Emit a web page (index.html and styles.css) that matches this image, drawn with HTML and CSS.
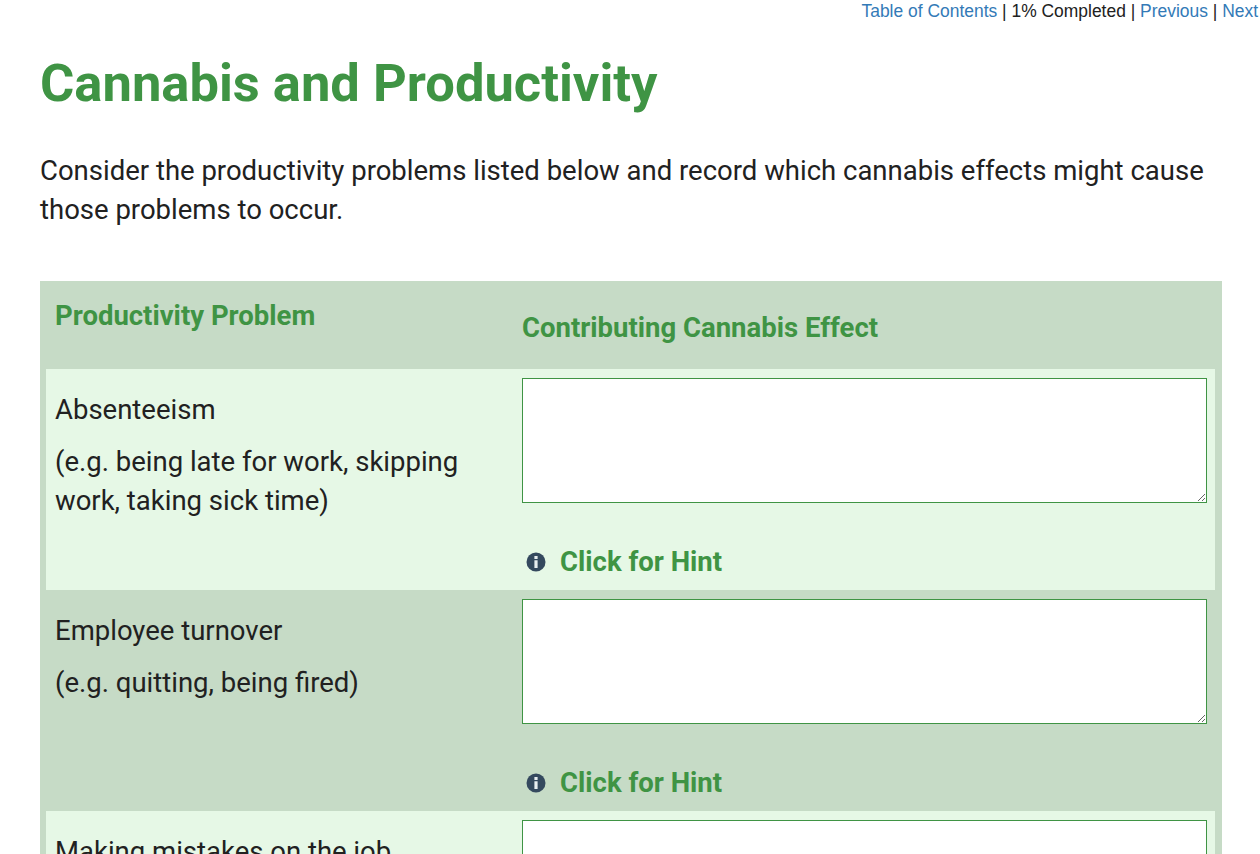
FILE: index.html
```html
<!DOCTYPE html>
<html lang="en">
<head>
  <meta charset="UTF-8">
  <title>Cannabis and Productivity</title>
  <link rel="stylesheet" href="styles.css">
</head>
<body>
  <div class="top-nav">
    <a href="#">Table of Contents</a> | <span class="progress">1% Completed</span> | <a href="#">Previous</a> | <a href="#">Next</a>
  </div>
  <main class="content">
    <h1>Cannabis and Productivity</h1>
    <p class="intro">Consider the productivity problems listed below and record which cannabis effects might cause those problems to occur.</p>
    <table class="effects">
      <thead>
        <tr>
          <th class="col-problem">Productivity Problem</th>
          <th class="col-effect">Contributing Cannabis Effect</th>
        </tr>
      </thead>
      <tbody>
        <tr class="light">
          <td class="problem">
            <p>Absenteeism</p>
            <p>(e.g. being late for work, skipping work, taking sick time)</p>
          </td>
          <td class="effect">
            <textarea></textarea>
            <a class="hint" href="#">
              <svg class="hint-icon" viewBox="0 0 20 20"><circle cx="10" cy="10" r="9.5" fill="#34495e"/><path d="M8.4 4h3.2v3H8.4zM8.4 8.2h3.2v7.8H8.4z" fill="#e8eef0"/></svg>
              Click for Hint
            </a>
          </td>
        </tr>
        <tr class="dark">
          <td class="problem">
            <p>Employee turnover</p>
            <p>(e.g. quitting, being fired)</p>
          </td>
          <td class="effect">
            <textarea></textarea>
            <a class="hint" href="#">
              <svg class="hint-icon" viewBox="0 0 20 20"><circle cx="10" cy="10" r="9.5" fill="#34495e"/><path d="M8.4 4h3.2v3H8.4zM8.4 8.2h3.2v7.8H8.4z" fill="#e8eef0"/></svg>
              Click for Hint
            </a>
          </td>
        </tr>
        <tr class="light">
          <td class="problem">
            <p>Making mistakes on the job</p>
            <p>(e.g. errors, accidents)</p>
          </td>
          <td class="effect">
            <textarea></textarea>
            <a class="hint" href="#">
              <svg class="hint-icon" viewBox="0 0 20 20"><circle cx="10" cy="10" r="9.5" fill="#34495e"/><path d="M8.4 4h3.2v3H8.4zM8.4 8.2h3.2v7.8H8.4z" fill="#e8eef0"/></svg>
              Click for Hint
            </a>
          </td>
        </tr>
      </tbody>
    </table>
  </main>
</body>
</html>
```

FILE: styles.css
```css
body {
  margin: 0;
  background: #fff;
  color: #212121;
  font-family: Roboto, sans-serif;
  overflow-x: hidden;
}
.top-nav {
  text-align: right;
  padding-right: 2px;
  font-family: "Liberation Sans", Arial, sans-serif;
  font-size: 17.45px;
  line-height: 22px;
  white-space: nowrap;
}
.top-nav a {
  color: #337ab7;
  text-decoration: none;
}
.content {
  padding: 0 38px 0 40px;
}
h1 {
  margin: 26px 0 0;
  color: #3f9444;
  font-size: 52.5px;
  font-weight: 700;
  line-height: 71px;
}
.intro {
  margin: 32px 0 0;
  font-size: 27.5px;
  line-height: 39px;
}
.effects {
  width: 100%;
  margin-top: 52px;
  border-collapse: separate;
  border-spacing: 0;
  table-layout: fixed;
  background: #c6dbc6;
  padding: 0 7px 0 6px;
}
.effects th {
  height: 88px;
  color: #3f9444;
  font-size: 27.5px;
  font-weight: 700;
  text-align: left;
  padding: 0 9px;
  box-sizing: border-box;
}
.col-problem {
  width: 467px;
  vertical-align: top;
  padding-top: 18px !important;
}
.col-effect {
  vertical-align: middle;
  padding-top: 5px !important;
}
.light {
  background: #e6f8e6;
}
.dark {
  background: #c6dbc6;
}
.problem {
  vertical-align: top;
  padding: 18px 9px 0;
  font-size: 27.5px;
  line-height: 39px;
}
.problem p {
  margin: 3px 0 13px;
}
.effect {
  vertical-align: top;
  padding: 9px 8px 0 9px;
  height: 221px;
  box-sizing: border-box;
}
textarea {
  display: block;
  box-sizing: border-box;
  width: 100%;
  height: 125px;
  border: 1px solid #3f9444;
  background: #fff;
  padding: 4px;
  margin: 0;
}
.hint {
  display: flex;
  align-items: center;
  margin-top: 39px;
  color: #3f9444;
  font-size: 27.5px;
  font-weight: 700;
  line-height: 40px;
  text-decoration: none;
}
.hint-icon {
  width: 20px;
  height: 20px;
  margin: 0 14px 0 4px;
}
```
